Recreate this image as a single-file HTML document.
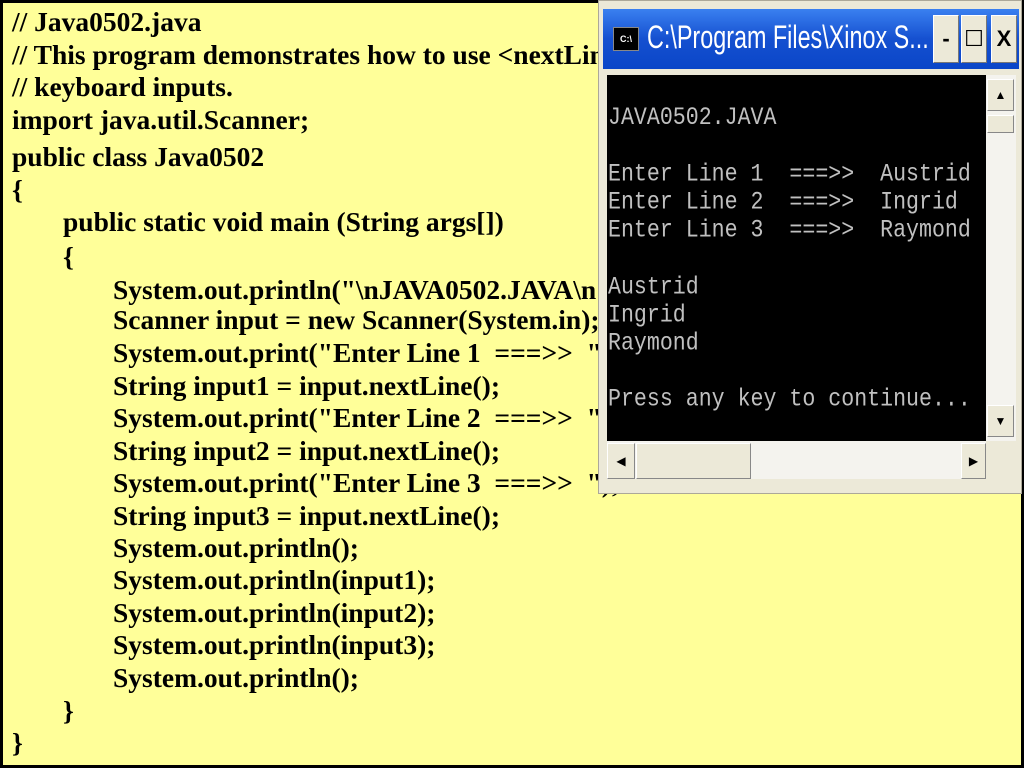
<!DOCTYPE html>
<html><head><style>
body{margin:0;width:1024px;height:768px;background:#000;position:relative;overflow:hidden}
#bg{position:absolute;left:3px;top:3px;width:1018px;height:762px;background:#ffff99}
.c{position:absolute;font:bold 27.5px "Liberation Serif",serif;color:#000;white-space:pre;line-height:28px}
#win{position:absolute;left:598px;top:0;width:424px;height:494px;background:#ece9d8;border:1px solid #aca899;box-sizing:border-box}
#title{position:absolute;left:4px;top:8px;width:416px;height:60px;background:linear-gradient(#3a80f0,#1550d0 50%,#0a46c8)}
#title .t{position:absolute;left:44px;top:10px;color:#fff;font:32px "Liberation Sans Narrow","Liberation Sans",sans-serif;transform:scaleX(0.73);transform-origin:left top;white-space:pre}
.ib{position:absolute;top:6px;width:24px;height:46px;background:#ece9d8;border:1px solid #fff;border-right-color:#777;border-bottom-color:#777;font:bold 22px "Liberation Sans",sans-serif;text-align:center;line-height:46px;color:#000}
#con{position:absolute;left:8px;top:74px;width:379px;height:366px;background:#000}
.m{position:absolute;left:1px;font:21.6px "Liberation Mono",monospace;color:#c0c0c0;white-space:pre;line-height:28px;transform:scaleY(1.15)}
#vs{position:absolute;left:387px;top:74px;width:30px;height:366px;background:#f4f3ee}
#hs{position:absolute;left:8px;top:440px;width:379px;height:38px;background:#f4f3ee}
.sb{position:absolute;background:#ece9d8;border:1px solid #fff;border-right-color:#888;border-bottom-color:#888;box-sizing:border-box;font-size:12px;text-align:center}
</style></head><body>
<div id="bg"></div>
<div class="c" style="left:12px;top:8px">// Java0502.java</div>
<div class="c" style="left:12px;top:41px">// This program demonstrates how to use &lt;nextLine&gt;</div>
<div class="c" style="left:12px;top:73px">// keyboard inputs.</div>
<div class="c" style="left:12px;top:106px">import java.util.Scanner;</div>
<div class="c" style="left:12px;top:143px">public class Java0502</div>
<div class="c" style="left:12px;top:176px">{</div>
<div class="c" style="left:63px;top:208px">public static void main (String args[])</div>
<div class="c" style="left:63px;top:243px">{</div>
<div class="c" style="left:113px;top:276px">System.out.println("\nJAVA0502.JAVA\n");</div>
<div class="c" style="left:113px;top:306px">Scanner input = new Scanner(System.in);</div>
<div class="c" style="left:113px;top:339px">System.out.print("Enter Line 1  ===>>  ");</div>
<div class="c" style="left:113px;top:372px">String input1 = input.nextLine();</div>
<div class="c" style="left:113px;top:404px">System.out.print("Enter Line 2  ===>>  ");</div>
<div class="c" style="left:113px;top:437px">String input2 = input.nextLine();</div>
<div class="c" style="left:113px;top:469px">System.out.print("Enter Line 3  ===>>  ");</div>
<div class="c" style="left:113px;top:502px">String input3 = input.nextLine();</div>
<div class="c" style="left:113px;top:534px">System.out.println();</div>
<div class="c" style="left:113px;top:566px">System.out.println(input1);</div>
<div class="c" style="left:113px;top:599px">System.out.println(input2);</div>
<div class="c" style="left:113px;top:631px">System.out.println(input3);</div>
<div class="c" style="left:113px;top:664px">System.out.println();</div>
<div class="c" style="left:63px;top:697px">}</div>
<div class="c" style="left:12px;top:729px">}</div>
<div id="win">
 <div id="title">
  <div style="position:absolute;left:10px;top:18px;width:24px;height:22px;background:#000;border:1px solid #888;color:#fff;font:bold 9px 'Liberation Sans',sans-serif;line-height:22px;text-align:center">C:\</div>
  <div class="t">C:\Program Files\Xinox S...</div>
  <div class="ib" style="left:330px">-</div>
  <div class="ib" style="left:358px;font-weight:normal">☐</div>
  <div class="ib" style="left:388px">X</div>
 </div>
 <div id="con">
  <div class="m" style="top:29px">JAVA0502.JAVA</div>
  <div class="m" style="top:86px">Enter Line 1  ===&gt;&gt;  Austrid</div>
  <div class="m" style="top:114px">Enter Line 2  ===&gt;&gt;  Ingrid</div>
  <div class="m" style="top:142px">Enter Line 3  ===&gt;&gt;  Raymond</div>
  <div class="m" style="top:199px">Austrid</div>
  <div class="m" style="top:227px">Ingrid</div>
  <div class="m" style="top:255px">Raymond</div>
  <div class="m" style="top:311px">Press any key to continue...</div>
 </div>
 <div id="vs">
  <div class="sb" style="left:1px;top:4px;width:27px;height:32px;line-height:30px">▲</div>
  <div class="sb" style="left:1px;top:40px;width:27px;height:18px"></div>
  <div class="sb" style="left:1px;top:330px;width:27px;height:32px;line-height:30px">▼</div>
 </div>
 <div id="hs">
  <div class="sb" style="left:0;top:2px;width:28px;height:36px;line-height:34px">◀</div>
  <div class="sb" style="left:29px;top:2px;width:115px;height:36px"></div>
  <div class="sb" style="left:354px;top:2px;width:25px;height:36px;line-height:34px">▶</div>
 </div>
</div>
</body></html>
